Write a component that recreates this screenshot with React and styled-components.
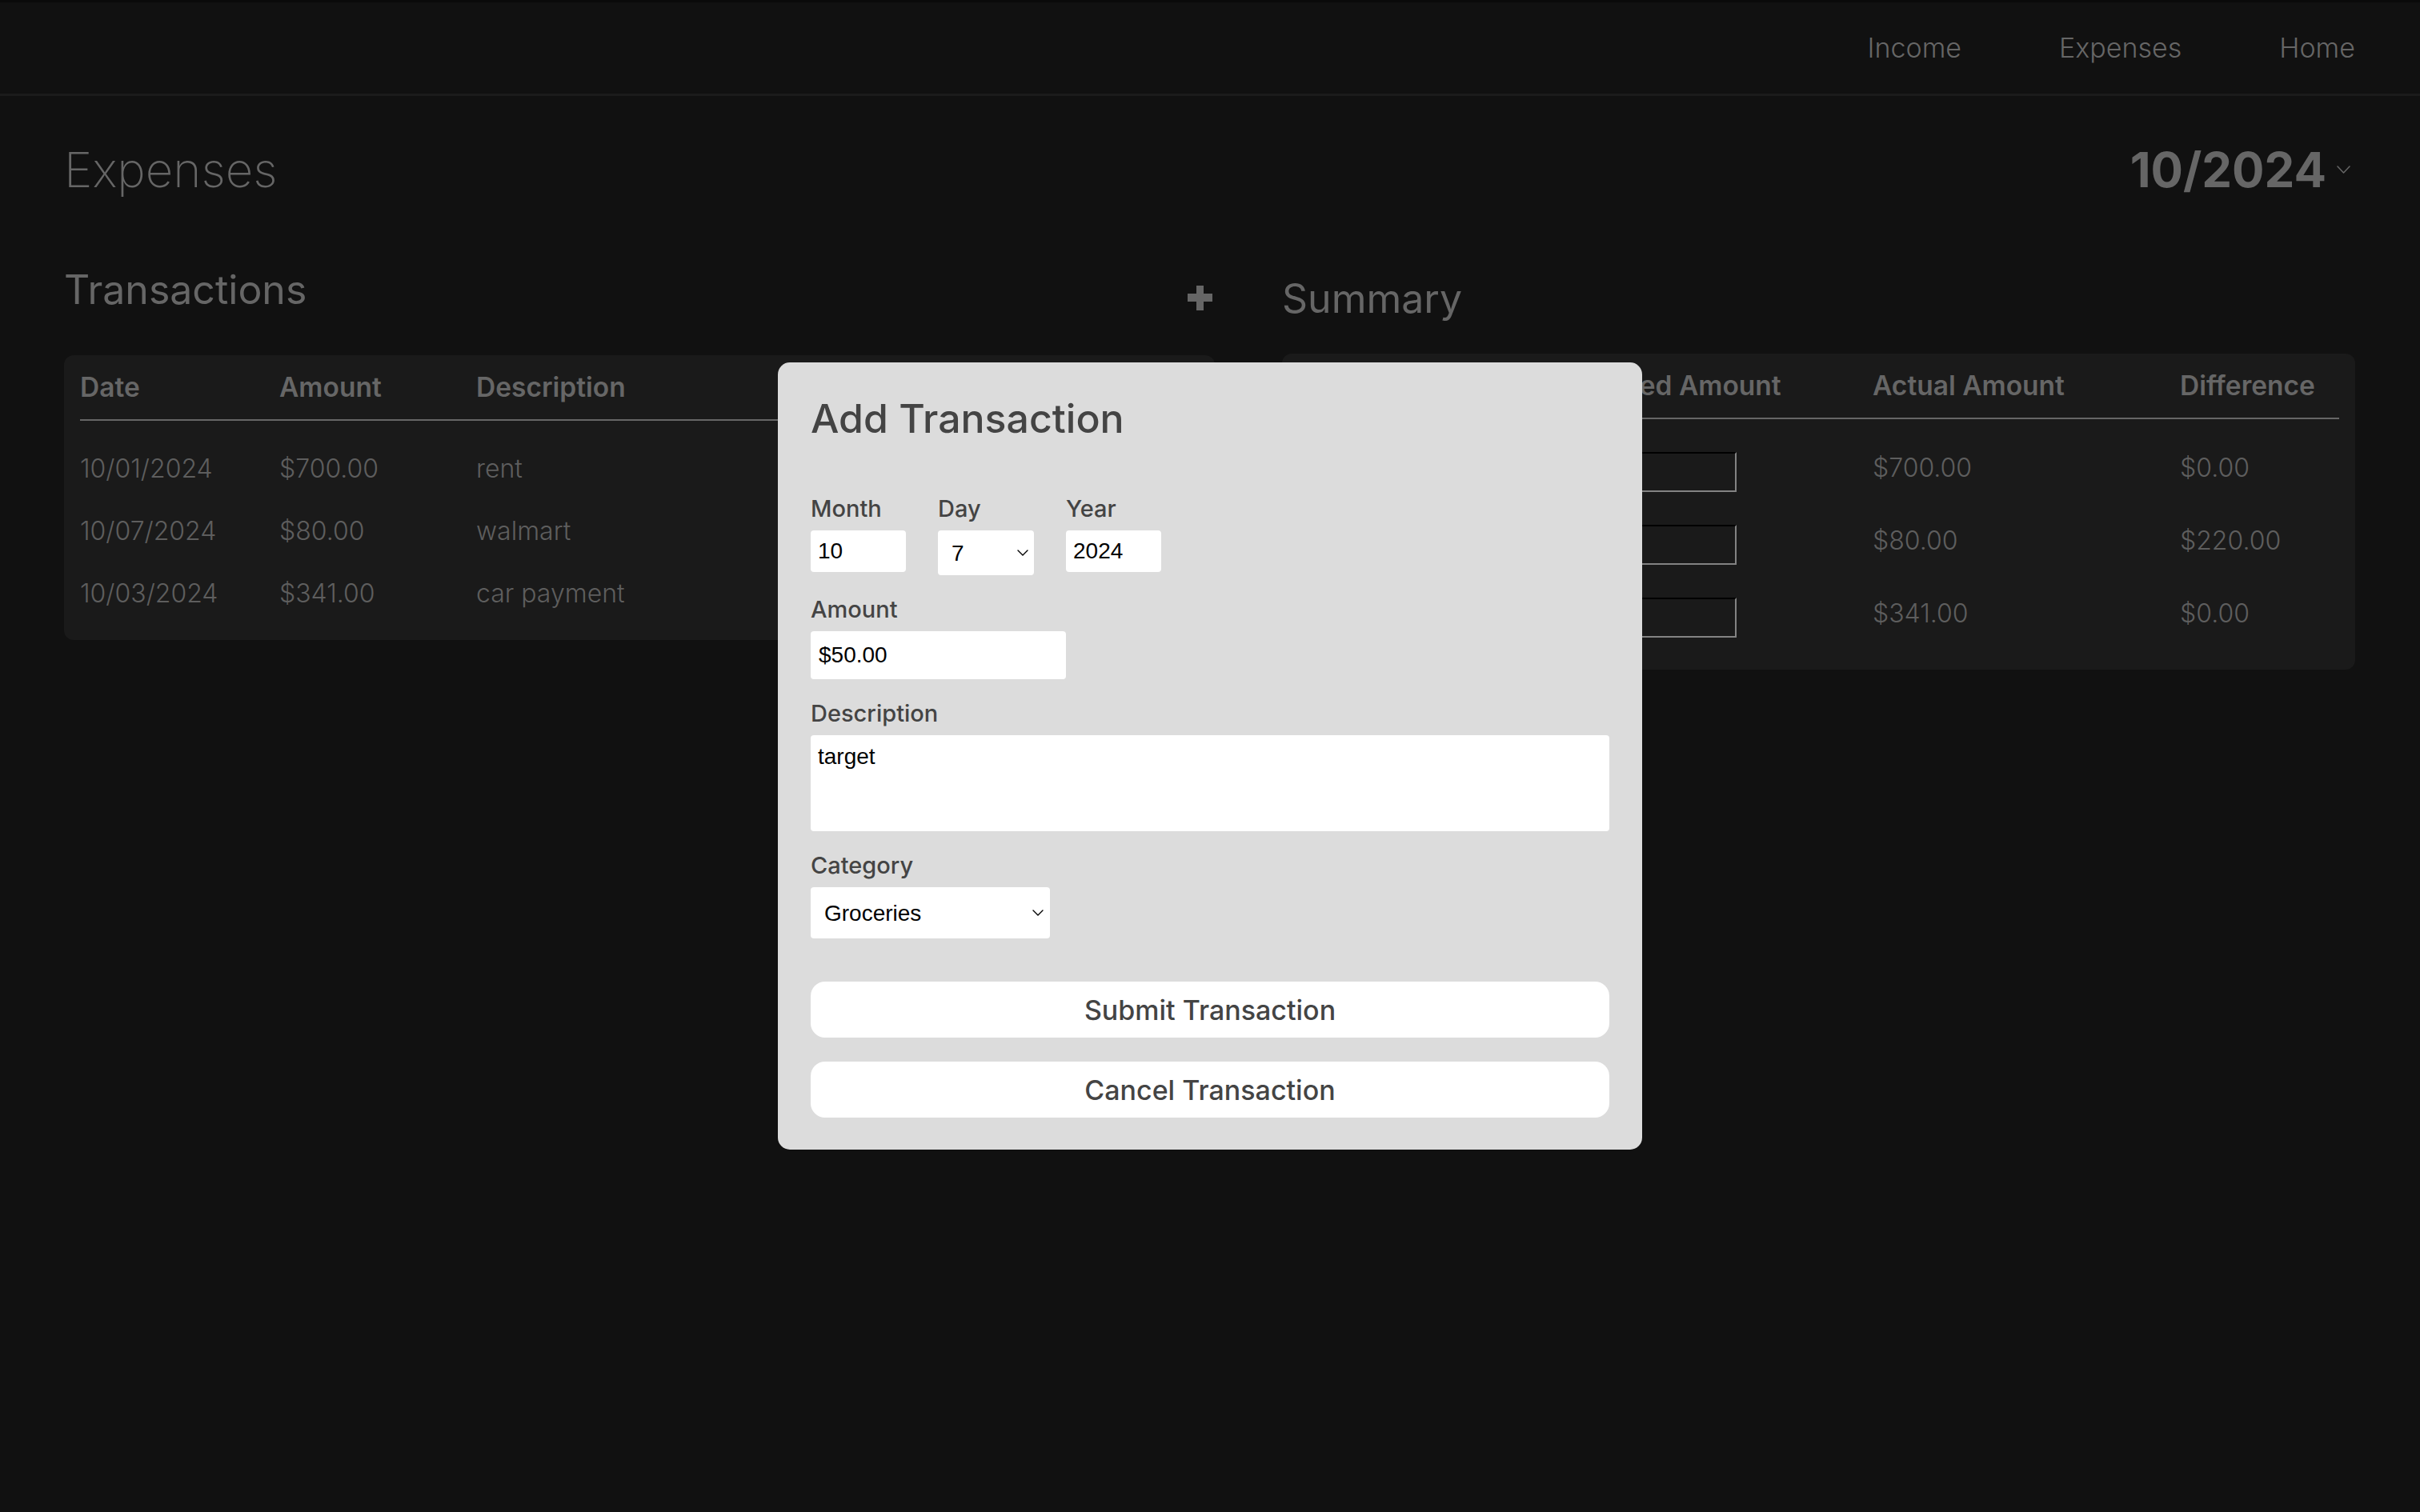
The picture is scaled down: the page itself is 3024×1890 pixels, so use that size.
import React from "react";
import styled, { createGlobalStyle } from "styled-components";

const GlobalStyle = createGlobalStyle`
  * { box-sizing: border-box; }
  html, body { margin: 0; padding: 0; background: #111111; }
  body { font-family: Inter, "Noto Sans", sans-serif; color: #666; }
`;

const Page = styled.div`
  min-height: 1890px;
  background: #111111;
`;

const TopBar = styled.header`
  height: 120px;
  border-top: 3px solid #0a0a0a;
  border-bottom: 3px solid #1b1b1b;
  display: flex;
  align-items: center;
  justify-content: flex-end;
  padding: 0 81px;
`;

const Nav = styled.nav`
  display: flex;
  gap: 122px;
`;

const NavLink = styled.a`
  font-size: 34px;
  font-weight: 300;
  color: #666;
  text-decoration: none;
  line-height: 40px;
`;

const Main = styled.main`
  padding: 56px 81px 0 80px;
`;

const TitleRow = styled.div`
  display: flex;
  justify-content: space-between;
  align-items: center;
  height: 72px;
`;

const PageTitle = styled.h1`
  margin: 0;
  font-size: 60px;
  line-height: 72px;
  font-weight: 200;
  color: #666;
`;

const MonthPicker = styled.div`
  display: flex;
  align-items: center;
  gap: 13px;
  padding-right: 6px;
  font-size: 60px;
  line-height: 72px;
  font-weight: 700;
  color: #666;
`;

const Columns = styled.div`
  display: grid;
  grid-template-columns: 1438px 1341px;
  column-gap: 84px;
  align-items: start;
`;

const Column = styled.section`
  display: flex;
  flex-direction: column;
`;

const SectionHead = styled.div`
  display: flex;
  justify-content: space-between;
  align-items: flex-end;
  height: 60px;
  margin-top: ${(p) => p.$top}px;
  margin-bottom: ${(p) => p.$bottom}px;
`;

const SectionTitle = styled.h2`
  margin: 0;
  font-size: 50px;
  line-height: 60px;
  font-weight: 400;
  color: #666;
`;

const AddButton = styled.button`
  width: 31px;
  height: 31px;
  padding: 0;
  margin: 0 3px 4px 0;
  border: none;
  background: none;
  display: flex;
`;

const Panel = styled.div`
  background: #1a1a1a;
  border-radius: 12px;
  padding: 20px;
`;

const HeadRow = styled.div`
  display: grid;
  grid-template-columns: ${(p) => p.$cols};
  padding-bottom: 20px;
  border-bottom: 2px solid #666;
`;

const HeadCell = styled.div`
  font-size: 33.5px;
  line-height: 40px;
  font-weight: 600;
  color: #666;
  white-space: nowrap;
`;

const Body = styled.div`
  padding-top: 20px;
`;

const Row = styled.div`
  display: grid;
  grid-template-columns: ${(p) => p.$cols};
  height: ${(p) => p.$h}px;
  align-items: center;
`;

const Cell = styled.div`
  font-size: 32px;
  font-weight: 300;
  color: #5e5e5e;
  white-space: nowrap;
  padding-bottom: ${(p) => p.$lift || 0}px;
`;

const BudgetInput = styled.input`
  width: 237px;
  height: 50px;
  background: #1a1a1a;
  border: 2px inset #2f2f2f;
  border-top-color: #0b0b0b;
  border-left-color: #0b0b0b;
  color: #5e5e5e;
  font-size: 26px;
  padding: 0 8px;
`;

/* modal */
const Overlay = styled.div`
  position: fixed;
  inset: 0;
  display: flex;
  align-items: center;
  justify-content: center;
`;

const Modal = styled.div`
  width: 1080px;
  background: #dcdcdc;
  border-radius: 15px;
  padding: 40px 41px 40px 41px;
  display: flex;
  flex-direction: column;
`;

const ModalTitle = styled.h3`
  margin: 0 0 65px;
  font-size: 50px;
  line-height: 60px;
  font-weight: 500;
  color: #444;
`;

const DateRow = styled.div`
  display: flex;
  gap: 40px;
  align-items: flex-start;
`;

const Field = styled.div`
  display: flex;
  flex-direction: column;
  gap: 10px;
  margin-top: ${(p) => (p.$first ? 0 : 25)}px;
`;

const Label = styled.label`
  font-size: 29px;
  line-height: 35px;
  font-weight: 500;
  color: #444;
`;

const TextInput = styled.input`
  width: ${(p) => p.$w}px;
  height: ${(p) => p.$h}px;
  border: none;
  border-radius: 4px;
  background: #fff;
  font-family: "Liberation Sans", Arial, sans-serif;
  font-size: 28px;
  color: #000;
  padding: 0 ${(p) => p.$pad || 9}px;
  outline: none;
`;

const SelectWrap = styled.div`
  position: relative;
  width: ${(p) => p.$w}px;
  height: ${(p) => p.$h}px;
`;

const Select = styled.select`
  appearance: none;
  width: 100%;
  height: 100%;
  border: none;
  border-radius: 4px;
  background: #fff;
  font-family: "Liberation Sans", Arial, sans-serif;
  font-size: 28px;
  color: #000;
  padding: 0 ${(p) => p.$pad}px;
  outline: none;
`;

const SelectArrow = styled.span`
  position: absolute;
  right: ${(p) => p.$right}px;
  top: 50%;
  transform: translateY(-50%);
  display: flex;
  pointer-events: none;
`;

const TextArea = styled.textarea`
  width: 100%;
  height: 120px;
  border: none;
  border-radius: 4px;
  background: #fff;
  font-family: "Liberation Sans", Arial, sans-serif;
  font-size: 28px;
  line-height: 32px;
  color: #000;
  padding: 11px 9px;
  resize: none;
  outline: none;
`;

const Actions = styled.div`
  display: flex;
  flex-direction: column;
  gap: 30px;
  margin-top: 54px;
`;

const ActionButton = styled.button`
  height: 70px;
  width: 100%;
  border: none;
  border-radius: 18px;
  background: #fff;
  font-family: Inter, "Noto Sans", sans-serif;
  font-size: 34px;
  font-weight: 500;
  color: #444;
`;

const Chevron = ({ w = 14, h = 8, color = "#000", stroke = 1.6 }) => (
  <svg width={w} height={h} viewBox={`0 0 ${w} ${h}`} fill="none">
    <polyline
      points={`1,1 ${w / 2},${h - 1} ${w - 1},1`}
      stroke={color}
      strokeWidth={stroke}
      strokeLinecap="round"
      strokeLinejoin="round"
    />
  </svg>
);

const TX_COLS = "249px 246px 1fr";
const SUM_COLS = "311px 407px 384px 1fr";

const transactions = [
  { date: "10/01/2024", amount: "$700.00", desc: "rent" },
  { date: "10/07/2024", amount: "$80.00", desc: "walmart" },
  { date: "10/03/2024", amount: "$341.00", desc: "car payment" },
];

const summary = [
  { cat: "Housing", actual: "$700.00", diff: "$0.00" },
  { cat: "Groceries", actual: "$80.00", diff: "$220.00" },
  { cat: "Transportation", actual: "$341.00", diff: "$0.00" },
];

export default function App() {
  return (
    <Page>
      <GlobalStyle />
      <TopBar>
        <Nav>
          <NavLink href="#">Income</NavLink>
          <NavLink href="#">Expenses</NavLink>
          <NavLink href="#">Home</NavLink>
        </Nav>
      </TopBar>
      <Main>
        <TitleRow>
          <PageTitle>Expenses</PageTitle>
          <MonthPicker>
            10/2024
            <Chevron w={17} h={10} color="#666" stroke={1.5} />
          </MonthPicker>
        </TitleRow>
        <Columns>
          <Column>
            <SectionHead $top={84} $bottom={52}>
              <SectionTitle>Transactions</SectionTitle>
              <AddButton aria-label="Add transaction">
                <svg width="31" height="31" viewBox="0 0 31 31">
                  <rect x="0" y="10" width="31" height="10" fill="#666" />
                  <rect x="11" y="0" width="9" height="31" fill="#666" />
                </svg>
              </AddButton>
            </SectionHead>
            <Panel>
              <HeadRow $cols={TX_COLS}>
                <HeadCell>Date</HeadCell>
                <HeadCell>Amount</HeadCell>
                <HeadCell>Description</HeadCell>
              </HeadRow>
              <Body>
                {transactions.map((t) => (
                  <Row key={t.date} $cols={TX_COLS} $h={78}>
                    <Cell>{t.date}</Cell>
                    <Cell>{t.amount}</Cell>
                    <Cell>{t.desc}</Cell>
                  </Row>
                ))}
              </Body>
            </Panel>
          </Column>
          <Column>
            <SectionHead $top={95} $bottom={39}>
              <SectionTitle>Summary</SectionTitle>
            </SectionHead>
            <Panel>
              <HeadRow $cols={SUM_COLS}>
                <HeadCell>Category</HeadCell>
                <HeadCell>Budgeted Amount</HeadCell>
                <HeadCell>Actual Amount</HeadCell>
                <HeadCell>Difference</HeadCell>
              </HeadRow>
              <Body>
                {summary.map((s) => (
                  <Row key={s.cat} $cols={SUM_COLS} $h={91}>
                    <Cell $lift={11}>{s.cat}</Cell>
                    <Cell>
                      <BudgetInput defaultValue="" />
                    </Cell>
                    <Cell $lift={11}>{s.actual}</Cell>
                    <Cell $lift={11}>{s.diff}</Cell>
                  </Row>
                ))}
              </Body>
            </Panel>
          </Column>
        </Columns>
      </Main>

      <Overlay>
        <Modal>
          <ModalTitle>Add Transaction</ModalTitle>
          <DateRow>
            <Field $first>
              <Label>Month</Label>
              <TextInput $w={119} $h={52} defaultValue="10" />
            </Field>
            <Field $first>
              <Label>Day</Label>
              <SelectWrap $w={120} $h={56}>
                <Select $pad={17} defaultValue="7">
                  {Array.from({ length: 31 }, (_, i) => (
                    <option key={i + 1} value={String(i + 1)}>
                      {i + 1}
                    </option>
                  ))}
                </Select>
                <SelectArrow $right={7}>
                  <Chevron w={14} h={8} stroke={1.4} />
                </SelectArrow>
              </SelectWrap>
            </Field>
            <Field $first>
              <Label>Year</Label>
              <TextInput $w={119} $h={52} defaultValue="2024" />
            </Field>
          </DateRow>
          <Field>
            <Label>Amount</Label>
            <TextInput $w={319} $h={60} $pad={10} defaultValue="$50.00" />
          </Field>
          <Field>
            <Label>Description</Label>
            <TextArea defaultValue="target" />
          </Field>
          <Field>
            <Label>Category</Label>
            <SelectWrap $w={299} $h={64}>
              <Select $pad={17} defaultValue="Groceries">
                <option>Housing</option>
                <option>Groceries</option>
                <option>Transportation</option>
              </Select>
              <SelectArrow $right={8}>
                <Chevron w={14} h={8} stroke={1.4} />
              </SelectArrow>
            </SelectWrap>
          </Field>
          <Actions>
            <ActionButton>Submit Transaction</ActionButton>
            <ActionButton>Cancel Transaction</ActionButton>
          </Actions>
        </Modal>
      </Overlay>
    </Page>
  );
}
